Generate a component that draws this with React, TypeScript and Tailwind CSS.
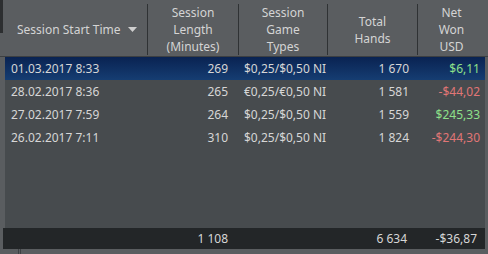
const rows = [
  { date: "01.03.2017 8:33", len: "269", game: "$0,25/$0,50 NI", hands: "1 670", net: "$6,11", pos: true },
  { date: "28.02.2017 8:36", len: "265", game: "€0,25/€0,50 NI", hands: "1 581", net: "-$44,02", pos: false },
  { date: "27.02.2017 7:59", len: "264", game: "$0,25/$0,50 NI", hands: "1 559", net: "$245,33", pos: true },
  { date: "26.02.2017 7:11", len: "310", game: "$0,25/$0,50 NI", hands: "1 824", net: "-$244,30", pos: false },
];

const cols = "grid grid-cols-[142px_91px_89px_90px_1fr]";

export default function App() {
  return (
    <div className="flex h-[254px] w-[488px] flex-col overflow-hidden bg-[#5a5d60] font-['Noto_Sans',sans-serif] text-[12px]">
      {/* header */}
      <div className="flex h-[57px] shrink-0 border-b border-[#3c3f42] text-[#d4d4d4]">
        <div className="h-[33px] w-[3px] shrink-0 bg-[#2c2e30]" />
        <div className={`${cols} ml-[2px] flex-1 pr-[3px] leading-[17px]`}>
          <div className="flex items-center justify-between py-[4px] pl-[12px] pr-[8px]">
            <span>Session Start Time</span>
            <svg width="9" height="5" viewBox="0 0 9 5" className="mr-[2px]">
              <path d="M0 0h9L4.5 5z" fill="#cfcfcf" />
            </svg>
          </div>
          {[["Session", "Length", "(Minutes)"], ["Session", "Game", "Types"], ["Total", "Hands"], ["Net", "Won", "USD"]].map((h, i) => (
            <div key={i} className="my-[4px] flex flex-col items-center justify-center border-l border-[#2f3234] text-center">
              {h.map((l) => (
                <span key={l}>{l}</span>
              ))}
            </div>
          ))}
        </div>
      </div>

      {/* body */}
      <div className="ml-[5px] mr-[3px] flex flex-1 flex-col bg-[#474b4e] text-[#d6d6d6]">
        {rows.map((r, i) => (
          <div
            key={r.date}
            className={`${cols} h-[23px] items-center ${i === 0 ? "bg-gradient-to-b from-[#0a2352] to-[#153d72]" : ""}`}
          >
            <span className="pl-[6px]">{r.date}</span>
            <span className="pr-[10px] text-right">{r.len}</span>
            <span className="pl-[6px]">{r.game}</span>
            <span className="pr-[8px] text-right">{r.hands}</span>
            <span className={`pr-[5px] text-right ${r.pos ? "text-[#8ee08a]" : "text-[#e07676]"}`}>{r.net}</span>
          </div>
        ))}
      </div>

      {/* totals */}
      <div className={`${cols} ml-[3px] mr-[3px] h-[21px] shrink-0 items-center bg-[#232628] pl-[2px] text-[#d6d6d6]`}>
        <span />
        <span className="pr-[10px] text-right">1 108</span>
        <span />
        <span className="pr-[10px] text-right">6 634</span>
        <span className="pr-[8px] text-right">-$36,87</span>
      </div>

      {/* bottom strip */}
      <div className="flex h-[5px] shrink-0">
        <div className="w-[19px] border-r border-[#3e4144]" />
        <div className="w-[2px] border-r border-[#3e4144]" />
      </div>
    </div>
  );
}
